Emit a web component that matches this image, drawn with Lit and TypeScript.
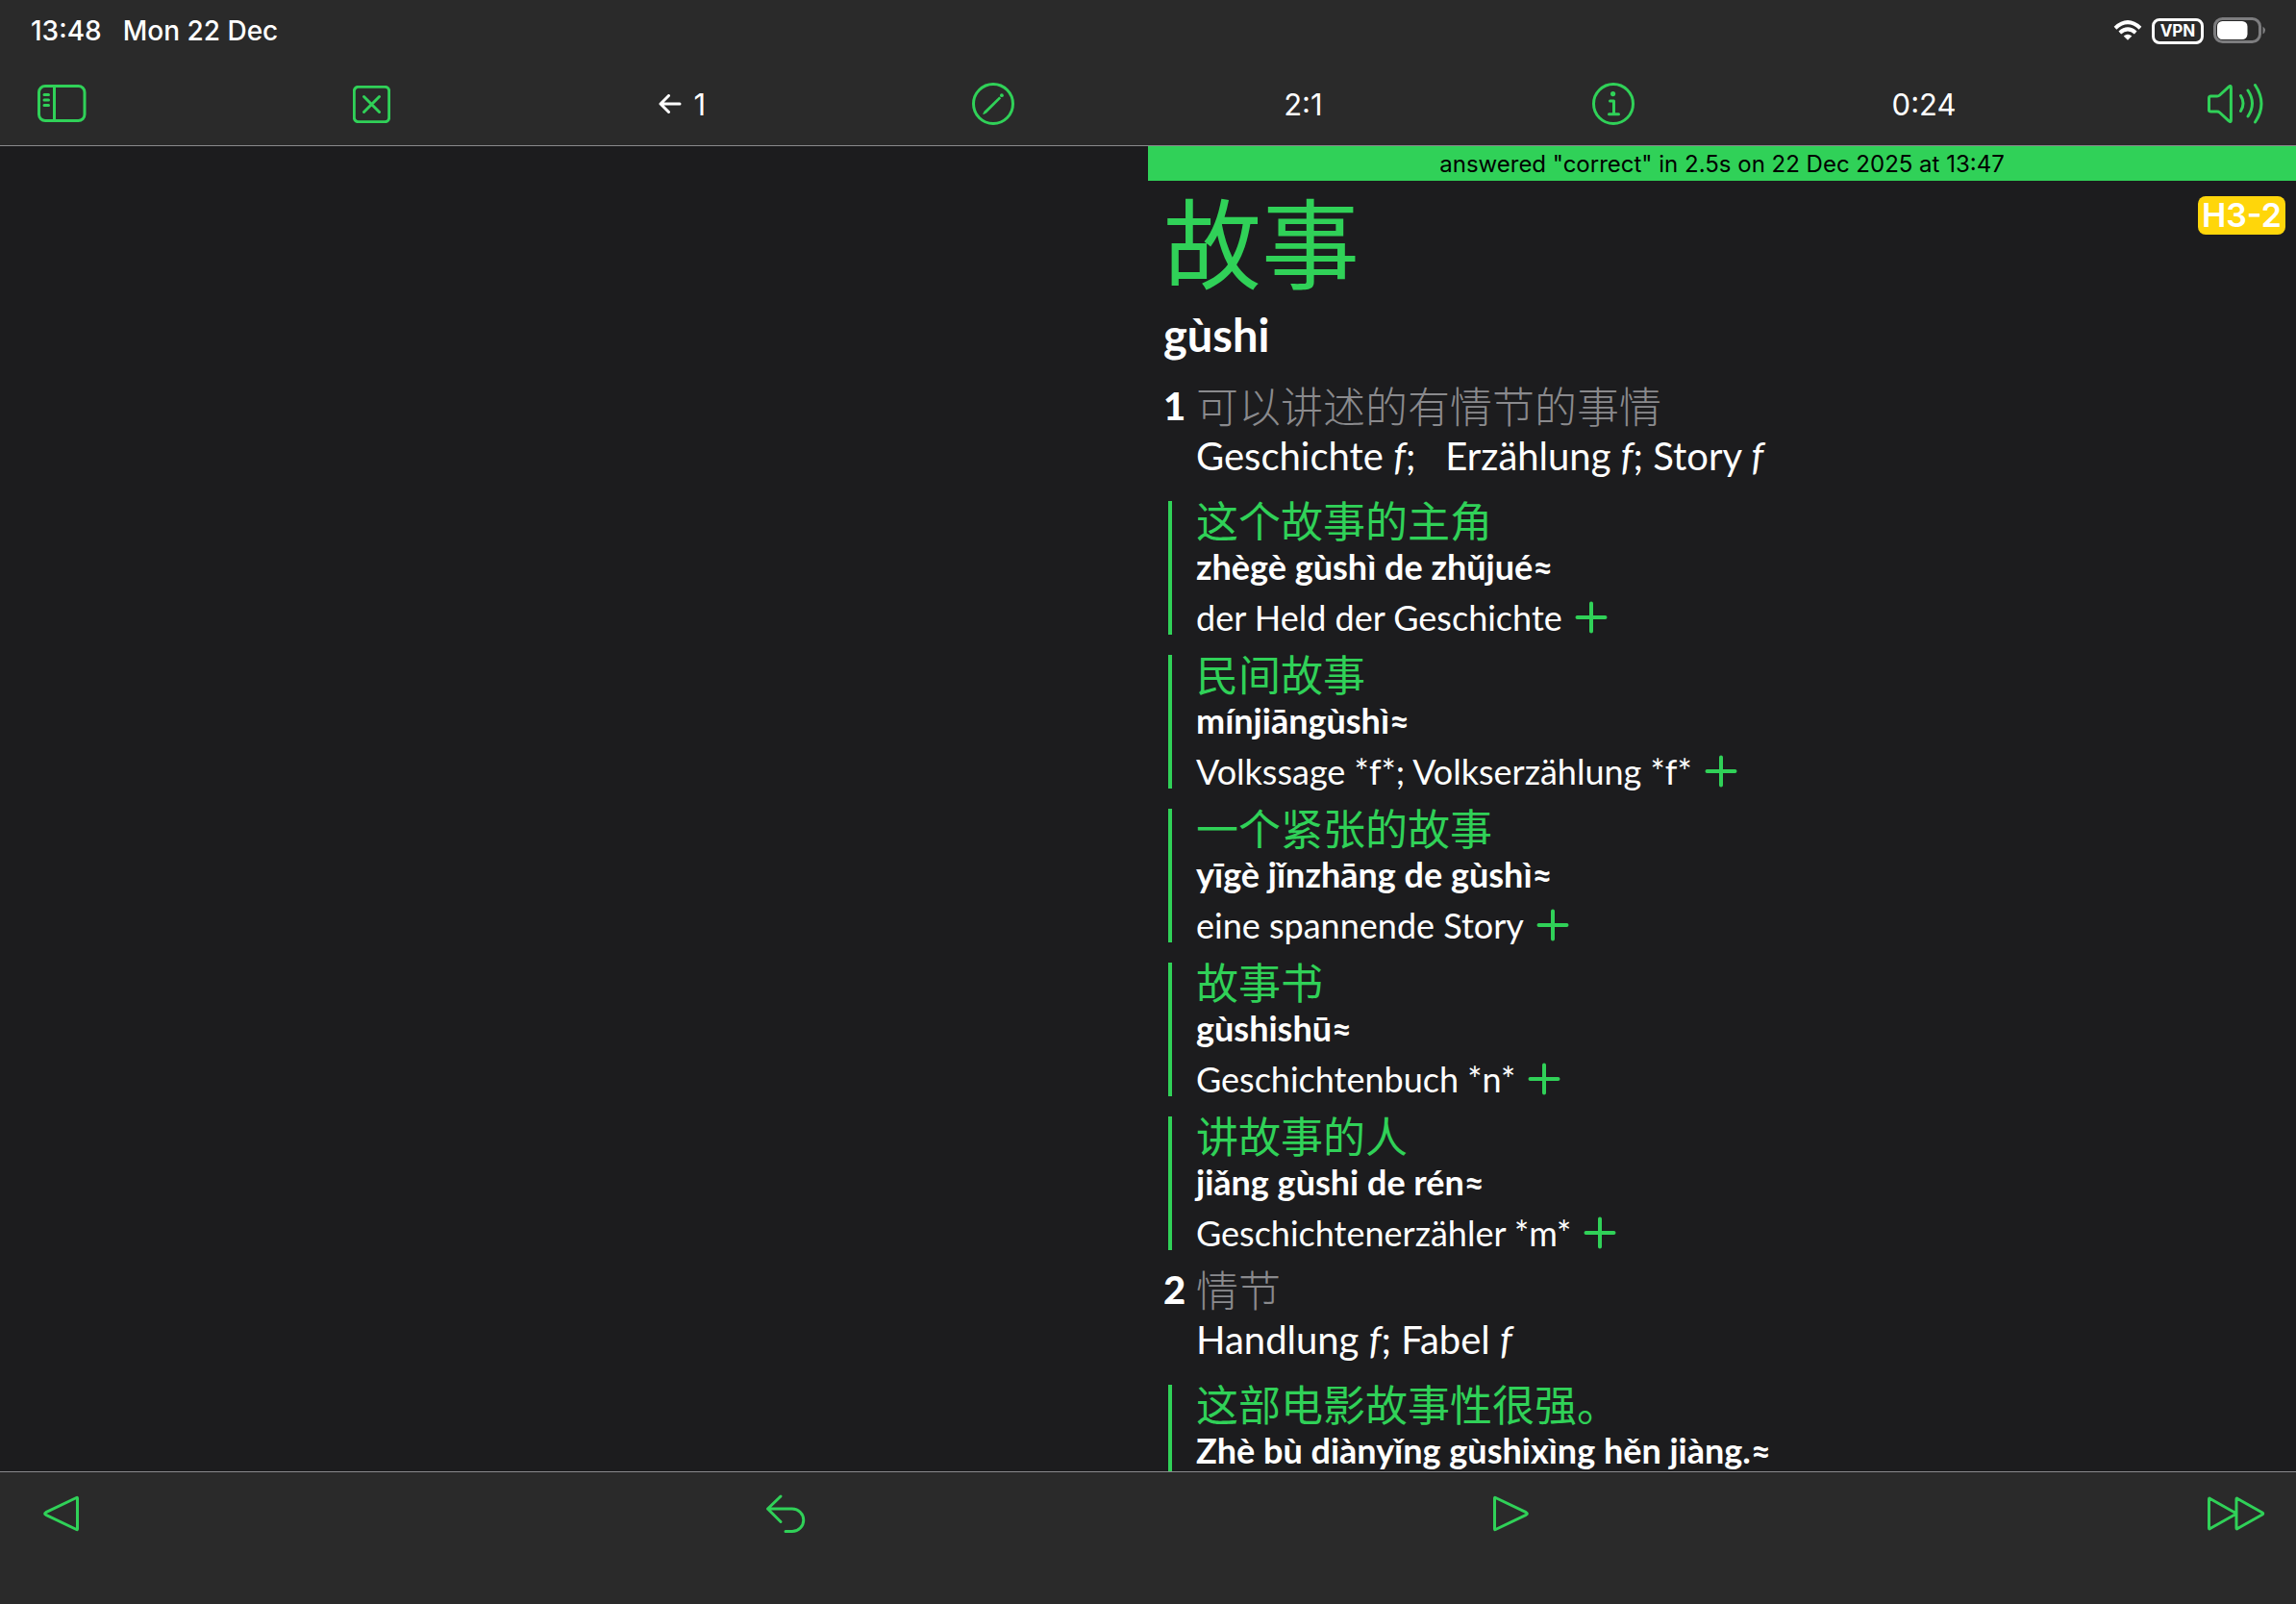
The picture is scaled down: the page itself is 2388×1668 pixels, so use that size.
import { LitElement, html, css, svg } from "lit";
import { customElement } from "lit/decorators.js";

type Example = { hanzi: string; pinyin: string; german?: string };

const icons = {
  sidebar: svg`<svg width="52" height="40" viewBox="0 0 52 40"><rect x="2.500" y="1.500" width="47.500" height="36" rx="6.500"/><path d="M18.500 1.500v36M8 10.500h4.500M8 16h4.500M8 21.500h4.500"/></svg>`,
  close: svg`<svg width="39" height="39" viewBox="0 0 39 39"><rect x="1.300" y="1.300" width="36.400" height="36.400" rx="4.500"/><path d="M11.500 11.500l16 16M27.500 11.500l-16 16"/></svg>`,
  arrow: svg`<svg width="24" height="20" viewBox="0 0 24 20"><path d="M22 10H2M10.500 1.500L2 10l8.500 8.500"/></svg>`,
  pencil: svg`<svg width="44" height="44" viewBox="0 0 44 44"><circle cx="22" cy="22" r="20.500"/><path class="solid" d="M28.300 14.400l1.900 1.900-15.200 15.300-3 1.400q-.8.100-.7-.7l1.500-2.900z"/><circle class="solid" cx="30.900" cy="13.200" r="1.900"/></svg>`,
  info: svg`<svg width="44" height="44" viewBox="0 0 44 44"><circle cx="22" cy="22" r="20.500"/><circle class="solid" cx="21.600" cy="11.600" r="2.600"/><path d="M18.500 19h4v13.500M17.500 32.700h10"/></svg>`,
  speaker: svg`<svg width="60" height="44" viewBox="0 0 60 44"><path d="M3.500 28.500V16q0-2 2-2h6.500q1.500 0 2.600-1L24 4.300q2.400-2 2.400.8v33.800q0 2.800-2.400.8L14.600 31q-1.100-1-2.600-1H5.500q-2 0-2-1.500zM36.500 13.500q5 8 0 16M44 8q9 13.500 0 27M51.500 2.500q13 19.500 0 38.500"/></svg>`,
  wifi: svg`<svg width="30" height="22" viewBox="0 0 30 22"><path d="M2 8.200Q15-3.800 28 8.200M6.800 13Q15 5.800 23.200 13"/><path class="solid" d="M15 20.800l-4.300-4.200q4.300-3.600 8.600 0z"/></svg>`,
  battery: svg`<svg width="56" height="28" viewBox="0 0 56 28"><rect class="shell" x="1.500" y="1.500" width="47" height="24" rx="8"/><rect class="solid" x="4" y="4" width="31.500" height="19" rx="5.500"/><path class="tip" d="M51.500 9.500q5 4 0 8z"/></svg>`,
  previous: svg`<svg width="38" height="38" viewBox="0 0 38 38"><path d="M35.500 3v32q0 1-1 .5L2.800 20.300q-2.300-1.300 0-2.600L34.500 2.500q1-.5 1 .5z"/></svg>`,
  undo: svg`<svg width="44" height="44" viewBox="0 0 44 44"><path d="M16 4L2.500 17 16 30.500M2.500 17H28a11.750 11.750 0 0 1 0 23.500h-7"/></svg>`,
  next: svg`<svg width="38" height="38" viewBox="0 0 38 38"><path d="M2.500 3v32q0 1 1 .5l31.700-15.200q2.300-1.300 0-2.600L3.500 2.500q-1-.5-1 .5z"/></svg>`,
  skip: svg`<svg width="62" height="36" viewBox="0 0 62 36"><path d="M3.500 3v30q0 1.500 1.200.5L30.500 19q1.500-1 0-2L4.700 2.500Q3.500 1.500 3.500 3zM32 3v30q0 1.500 1.200.5L59 19q1.500-1 0-2L33.200 2.500Q32 1.500 32 3z"/></svg>`,
  plus: svg`<svg class="plus" width="34" height="34" viewBox="0 0 34 34"><path d="M17 2.500v29M2.500 17h29"/></svg>`,
};

const firstExamples: Example[] = [
  { hanzi: "这个故事的主角", pinyin: "zhègè gùshì de zhǔjué≈", german: "der Held der Geschichte" },
  { hanzi: "民间故事", pinyin: "mínjiāngùshì≈", german: "Volkssage *f*; Volkserzählung *f*" },
  { hanzi: "一个紧张的故事", pinyin: "yīgè jǐnzhāng de gùshì≈", german: "eine spannende Story" },
  { hanzi: "故事书", pinyin: "gùshishū≈", german: "Geschichtenbuch *n*" },
  { hanzi: "讲故事的人", pinyin: "jiǎng gùshi de rén≈", german: "Geschichtenerzähler *m*" },
];

const secondExamples: Example[] = [
  { hanzi: "这部电影故事性很强。", pinyin: "Zhè bù diànyǐng gùshixìng hěn jiàng.≈" },
];

@customElement("app-root")
export class AppRoot extends LitElement {
  static styles = css`
    :host {
      display: grid;
      grid-template-rows: auto minmax(0, 1fr) auto;
      height: 100vh;
      background: #1c1c1e;
      color: #fff;
      font-family: Inter, "Liberation Sans", sans-serif;
      font-size: 31px;
      --green: #30d158;
      --line: #8a8a8d;
    }
    * { box-sizing: border-box; }
    svg {
      display: block;
      flex: none;
      fill: none;
      stroke: currentColor;
      stroke-width: 3;
      stroke-linecap: round;
      stroke-linejoin: round;
    }
    .solid { fill: currentColor; stroke: none; }
    .shell { stroke: #7d7d7f; }
    .tip { fill: #7d7d7f; stroke: none; }
    .plus { stroke-width: 4; }
    button {
      display: flex;
      align-items: center;
      justify-content: center;
      padding: 0;
      border: 0;
      background: none;
      color: var(--green);
      font: inherit;
      cursor: pointer;
    }
    .top { background: #2a2a2a; border-bottom: 1px solid var(--line); }
    .status {
      display: flex;
      align-items: center;
      justify-content: space-between;
      height: 64px;
      padding: 0 30px 0 32px;
      font-size: 28px;
      font-weight: 500;
    }
    .group { display: flex; align-items: center; gap: 10px; }
    .clock { gap: 22px; }
    .wifi svg { stroke-width: 4; stroke-linecap: butt; }
    .vpn {
      width: 54px;
      height: 27px;
      border: 3px solid #fff;
      border-radius: 8px;
      font-size: 17px;
      font-weight: 700;
      line-height: 21px;
      text-align: center;
    }
    .toolbar {
      display: flex;
      align-items: center;
      justify-content: space-between;
      height: 87px;
      padding: 1px 28px 0 28px;
    }
    .toolbar > *, .bottom > * { width: 72px; text-align: center; white-space: nowrap; }
    .back { gap: 12px; color: #fff; }
    main { display: grid; grid-template-columns: 1fr 1fr; min-height: 0; }
    .entry { min-width: 0; overflow: hidden; }
    .result {
      height: 36px;
      background: var(--green);
      color: #000;
      font-size: 24px;
      line-height: 38px;
      text-align: center;
    }
    .body { position: relative; padding: 1px 16px; font-family: Lato, "Noto Sans", "Noto Sans CJK SC", sans-serif; }
    .badge {
      position: absolute;
      top: 16px;
      right: 11px;
      padding: 0 4px;
      border-radius: 8px;
      background: #ffd60a;
      font-family: Inter, sans-serif;
      font-size: 34px;
      font-weight: 600;
      line-height: 40px;
    }
    h1, h2, h3, p { margin: 0; font-weight: 400; }
    .hanzi { color: var(--green); font-family: "Noto Sans CJK SC", sans-serif; }
    h1.hanzi { font-size: 102px; line-height: 120px; }
    .reading { margin: 9px 0 17px; font-size: 47px; font-weight: 700; line-height: 60px; }
    .sense { display: grid; grid-template-columns: 34px 1fr; }
    .number { font-size: 40px; font-weight: 900; line-height: 54px; }
    .gloss { color: var(--line); font-family: "Noto Sans CJK SC", sans-serif; font-size: 44px; font-weight: 300; line-height: 52px; }
    .meaning { grid-column: 2; font-size: 40px; line-height: 50px; }
    .examples { display: grid; gap: 21px; padding: 22px 0 14px 5px; }
    .example { height: 139px; padding-left: 25px; border-left: 4px solid var(--green); }
    .example .hanzi { font-size: 44px; line-height: 38px; }
    .pinyin { font-size: 36px; font-weight: 700; line-height: 60px; }
    .german { display: flex; align-items: center; gap: 13px; font-size: 36px; line-height: 46px; }
    .bottom {
      display: flex;
      align-items: flex-start;
      justify-content: space-between;
      height: 138px;
      padding: 21px 27px 0 28px;
      border-top: 1px solid var(--line);
      background: #2a2a2a;
    }
    .bottom button { height: 44px; }
  `;

  private renderExample(item: Example) {
    return html`<section class="example">
      <h3 class="hanzi" lang="zh">${item.hanzi}</h3>
      <p class="pinyin">${item.pinyin}</p>
      ${item.german
        ? html`<div class="german"><span>${item.german}</span><button aria-label="Add">${icons.plus}</button></div>`
        : null}
    </section>`;
  }

  render() {
    return html`
      <header class="top">
        <div class="status">
          <div class="group clock"><span>13:48</span><span>Mon 22 Dec</span></div>
          <div class="group">
            <span class="wifi">${icons.wifi}</span><span class="vpn">VPN</span>${icons.battery}
          </div>
        </div>
        <nav class="toolbar">
          <button aria-label="Sidebar">${icons.sidebar}</button>
          <button aria-label="Close">${icons.close}</button>
          <button class="back">${icons.arrow}<span>1</span></button>
          <button aria-label="Draw">${icons.pencil}</button>
          <span>2:1</span>
          <button aria-label="Info">${icons.info}</button>
          <span>0:24</span>
          <button aria-label="Play audio">${icons.speaker}</button>
        </nav>
      </header>
      <main>
        <div></div>
        <article class="entry">
          <div class="result">answered "correct" in 2.5s on 22 Dec 2025 at 13:47</div>
          <div class="body">
            <span class="badge">H3-2</span>
            <h1 class="hanzi" lang="zh">故事</h1>
            <p class="reading">gùshi</p>
            <div class="sense">
              <span class="number">1</span>
              <h2 class="gloss" lang="zh">可以讲述的有情节的事情</h2>
              <p class="meaning">Geschichte <i>f</i>; &nbsp; Erzählung <i>f</i>; Story <i>f</i></p>
            </div>
            <div class="examples">${firstExamples.map((e) => this.renderExample(e))}</div>
            <div class="sense">
              <span class="number">2</span>
              <h2 class="gloss" lang="zh">情节</h2>
              <p class="meaning">Handlung <i>f</i>; Fabel <i>f</i></p>
            </div>
            <div class="examples">${secondExamples.map((e) => this.renderExample(e))}</div>
          </div>
        </article>
      </main>
      <footer class="bottom">
        <button aria-label="Previous">${icons.previous}</button>
        <button aria-label="Undo">${icons.undo}</button>
        <button aria-label="Next">${icons.next}</button>
        <button aria-label="Skip">${icons.skip}</button>
      </footer>
    `;
  }
}
